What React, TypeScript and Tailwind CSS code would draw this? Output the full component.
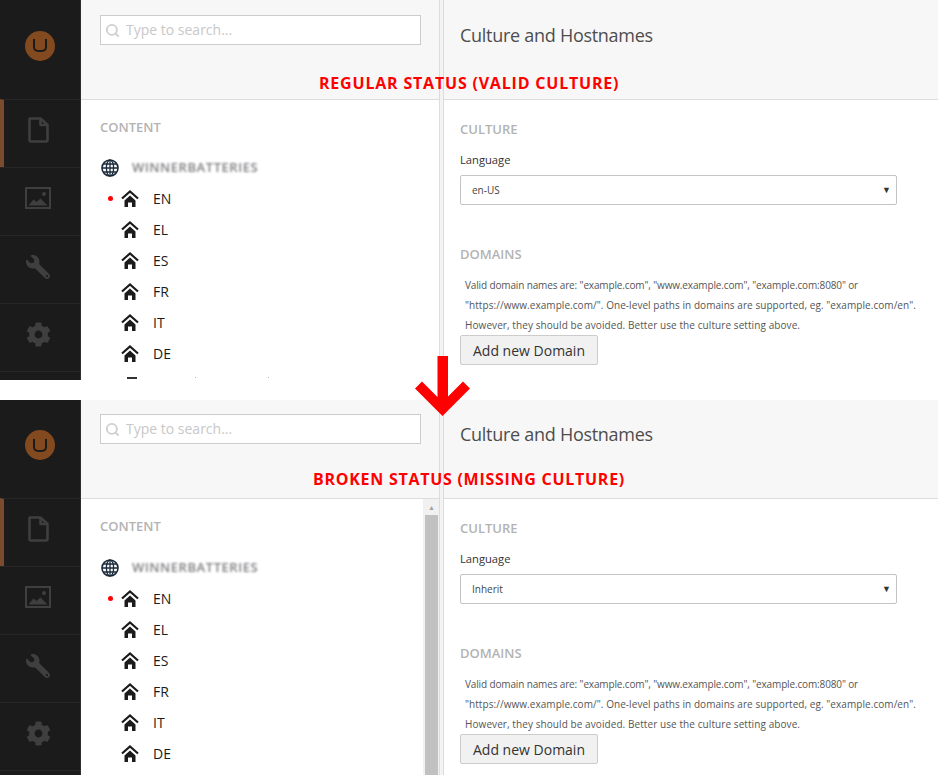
import { FaCog, FaWrench } from "react-icons/fa";
import { Search } from "lucide-react";

const font = "font-['Open_Sans',sans-serif]";
const langs = ["EN", "EL", "ES", "FR", "IT", "DE"];

const FileIcon = () => (
  <svg width="21" height="26" viewBox="0 0 21 26" fill="none" stroke="#3f3f3f" strokeWidth="2.6" strokeLinejoin="round">
    <path d="M2 1.5h10.5L19.5 8v15a1.5 1.5 0 0 1-1.5 1.5H3A1.5 1.5 0 0 1 1.5 23V2z" />
    <path d="M12.5 1.5V8h7" />
  </svg>
);

const PictureIcon = () => (
  <svg width="26" height="22" viewBox="0 0 26 22">
    <rect x="1" y="1" width="24" height="20" fill="none" stroke="#3f3f3f" strokeWidth="2" />
    <circle cx="19" cy="7" r="2" fill="#3f3f3f" />
    <path d="M3.5 18.5l5-6 3 2.5 4-3.5 7 7z" fill="#3f3f3f" />
  </svg>
);

const HomeIcon = () => (
  <svg width="18" height="17" viewBox="0 0 18 17" className="ml-[13px] shrink-0">
    <path d="M1 8.5L9 1.5l8 7" fill="none" stroke="#1b1b1b" strokeWidth="2.2" />
    <path d="M3.5 10.5L9 5.5l5.5 5V17H11v-4.5H7V17H3.5z" fill="#1b1b1b" />
  </svg>
);

const GlobeIcon = () => (
  <svg width="18" height="18" viewBox="0 0 18 18" fill="none" stroke="#1b2a3a" strokeWidth="1.3" className="shrink-0">
    <circle cx="9" cy="9" r="8" strokeWidth="1.6" />
    <ellipse cx="9" cy="9" rx="3.6" ry="8" />
    <path d="M9 1v16M1 9h16M2.2 5h13.6M2.2 13h13.6" />
  </svg>
);

const Sidebar = ({ compact }: { compact?: boolean }) => {
  return (
    <div className="w-[81px] h-full shrink-0 bg-[#1b1b1b] border-r border-[#2e2e2e] flex flex-col">
      <div className={`${compact ? "h-[98px]" : "h-[99px]"} shrink-0 flex items-center justify-center pb-2 pr-[1px]`}>
        <div className="size-[30px] rounded-full bg-[#83491f] flex items-center justify-center">
          <div className="w-[14px] h-[13px] border-2 border-t-0 border-[#1b1b1b] rounded-b-[5px]" />
        </div>
      </div>
      <div className="h-[68px] shrink-0 border-t border-[#262626] border-l-4 border-l-[#7a4b2c] flex items-center justify-center pr-2 pb-[7px]">
        <FileIcon />
      </div>
      <div className="h-[68px] shrink-0 border-t border-[#262626] flex items-center justify-center pr-1 pb-2">
        <PictureIcon />
      </div>
      <div className="h-[68px] shrink-0 border-t border-[#262626] flex items-center justify-center pr-1 pb-1.5">
        <FaWrench size={24} color="#3f3f3f" className="-scale-x-100" />
      </div>
      <div className="h-[68px] shrink-0 border-t border-[#262626] flex items-center justify-center pr-1 pb-1.5">
        <FaCog size={25} color="#3f3f3f" />
      </div>
      <div className="flex-1 border-t border-[#262626]" />
    </div>
  );
};

const Tree = ({ rowGap }: { rowGap: string }) => {
  return (
    <div className={`flex flex-col ${rowGap}`}>
      <div className="flex items-center h-[20px] pl-[20px] -mb-[1px]">
        <GlobeIcon />
        <span className="ml-[13px] text-[13px] tracking-[0.55px] font-semibold text-[#7f7c80] blur-[1.2px]">
          WINNERBATTERIES
        </span>
      </div>
      {langs.map((l, i) => (
        <div key={l} className="flex items-center h-[20px] pl-[27px] relative">
          {i === 0 && (
            <span className="absolute left-[27px] size-[5px] rounded-full bg-[#ff0000]" />
          )}
          <HomeIcon />
          <span className="ml-[14px] text-[14px] text-[#1b1b1b]">{l}</span>
        </div>
      ))}
      {/* next row, only its top edge is still visible */}
      <div className="flex items-start h-[20px] pt-[3px] pl-[46px]">
        <div className="w-[10px] h-[2px] bg-[#333333]" />
        <div className="w-[1px] h-[1px] ml-[58px] bg-[#b5b5b5]" />
        <div className="w-[1px] h-[1px] ml-[72px] bg-[#b5b5b5]" />
      </div>
    </div>
  );
};

const Panel = ({
  label,
  labelClass,
  culture,
  scrollbar,
  compact,
  rowGap,
  heightClass,
}: {
  label: string;
  labelClass: string;
  culture: string;
  scrollbar?: boolean;
  compact?: boolean;
  rowGap: string;
  heightClass: string;
}) => {
  return (
    <div className={`flex ${heightClass}`}>
      <Sidebar compact={compact} />
      <div className="flex-1 flex min-w-0 relative">
        {/* tree column */}
        <div className="w-[358px] shrink-0 flex flex-col overflow-hidden">
          <div className={`${compact ? "h-[99px] pt-[14px]" : "h-[100px] pt-[15px]"} shrink-0 bg-[#f7f7f7] border-b border-[#dcdcdc] pl-[19px]`}>
            <div className="w-[321px] h-[30px] bg-white border border-[#cccccc] flex items-center pl-[4px]">
              <Search size={15} color="#cfcfcf" strokeWidth={3} />
              <span className="ml-[6px] -mt-[2px] text-[14px] text-[#c8c8c8]">Type to search...</span>
            </div>
          </div>
          <div className="flex-1 flex min-h-0">
            <div className="flex-1 min-w-0">
              <p className={`pl-[19px] pt-[19px] ${compact ? "pb-[23px]" : "pb-[22px]"} text-[13px] leading-[17px] font-semibold text-[#b3b3b3]`}>
                CONTENT
              </p>
              <Tree rowGap={rowGap} />
            </div>
            {scrollbar && (
              <div className="w-[16px] bg-[#f1f1f1] flex flex-col pl-[2px]">
                <div className="w-[13px] h-[16px] flex items-center justify-center text-[7px] leading-none text-[#a3a3a3]">
                  ▲
                </div>
                <div className="w-[13px] flex-1 bg-[#c1c1c1]" />
              </div>
            )}
          </div>
        </div>
        {/* splitter */}
        <div className="w-[5px] shrink-0 border-x border-[#dcdcdc] bg-[#f3f3f3]" />
        {/* editor */}
        <div className="flex-1 min-w-0 flex flex-col">
          <div className={`${compact ? "h-[99px] pt-[21px]" : "h-[100px] pt-[22px]"} shrink-0 bg-[#f7f7f7] border-b border-[#dcdcdc] pl-[16px]`}>
            <h2 className="text-[18px] tracking-[-0.28px] leading-[26px] text-[#4d4d4d]">Culture and Hostnames</h2>
          </div>
          <div className="flex-1 bg-white pl-[16px]">
            <p className="pt-[21px] text-[13px] leading-[17px] font-semibold text-[#b3b3b3]">CULTURE</p>
            <p className="pt-[13px] text-[11.2px] leading-[17px] text-[#333333]">Language</p>
            <div className="mt-[7px] w-[437px] h-[30px] border border-[#c4c4c4] rounded-[2px] bg-white flex items-center justify-between pl-[11px] pr-[5px]">
              <span className="text-[10px] text-[#444444]">{culture}</span>
              <span className="text-[9px] text-[#333333]">▼</span>
            </div>
            <p className="pt-[41px] text-[13px] leading-[17px] font-semibold text-[#b3b3b3]">DOMAINS</p>
            <div className="pt-[12px] pl-[5px] text-[10px] leading-[20px] text-[#555555] whitespace-nowrap">
              <p className="tracking-[-0.14px]">Valid domain names are: "example.com", "www.example.com", "example.com:8080" or</p>
              <p className="tracking-[0.06px]">"https://www.example.com/". One-level paths in domains are supported, eg. "example.com/en".</p>
              <p className="tracking-[0.08px]">However, they should be avoided. Better use the culture setting above.</p>
            </div>
            <button className="w-[138px] h-[30px] bg-[#f1f1f1] border border-[#cccccc] rounded-[2px] text-[14px] text-[#333333]">
              Add new Domain
            </button>
          </div>
        </div>
        <div className={`absolute font-bold text-[16px] leading-[20px] text-[#ff0000] whitespace-nowrap ${labelClass}`}>
          {label}
        </div>
      </div>
    </div>
  );
};

const App = () => {
  return (
    <div className={`w-[938px] h-[775px] bg-white overflow-hidden relative ${font}`}>
      <Panel
        label="REGULAR STATUS (VALID CULTURE)"
        labelClass="left-[238px] top-[73px] tracking-[0.8px]"
        culture="en-US"
        rowGap="gap-[11px]"
        heightClass="h-[380px]"
      />
      <div className="h-[20px]" />
      <Panel
        label="BROKEN STATUS (MISSING CULTURE)"
        labelClass="left-[232px] top-[69px] tracking-[0.73px]"
        culture="Inherit"
        scrollbar
        compact
        rowGap="gap-[11.1px]"
        heightClass="h-[375px]"
      />
      {/* arrow between both states */}
      <svg className="absolute left-[415px] top-[356px]" width="56" height="60" viewBox="0 0 56 60">
        <path d="M22.5 0H33v40.5L48 25.5l7 7L27.5 60 0 32.500l7-7L22.500 41z" fill="#ff0000" />
      </svg>
    </div>
  );
};

export default App;
